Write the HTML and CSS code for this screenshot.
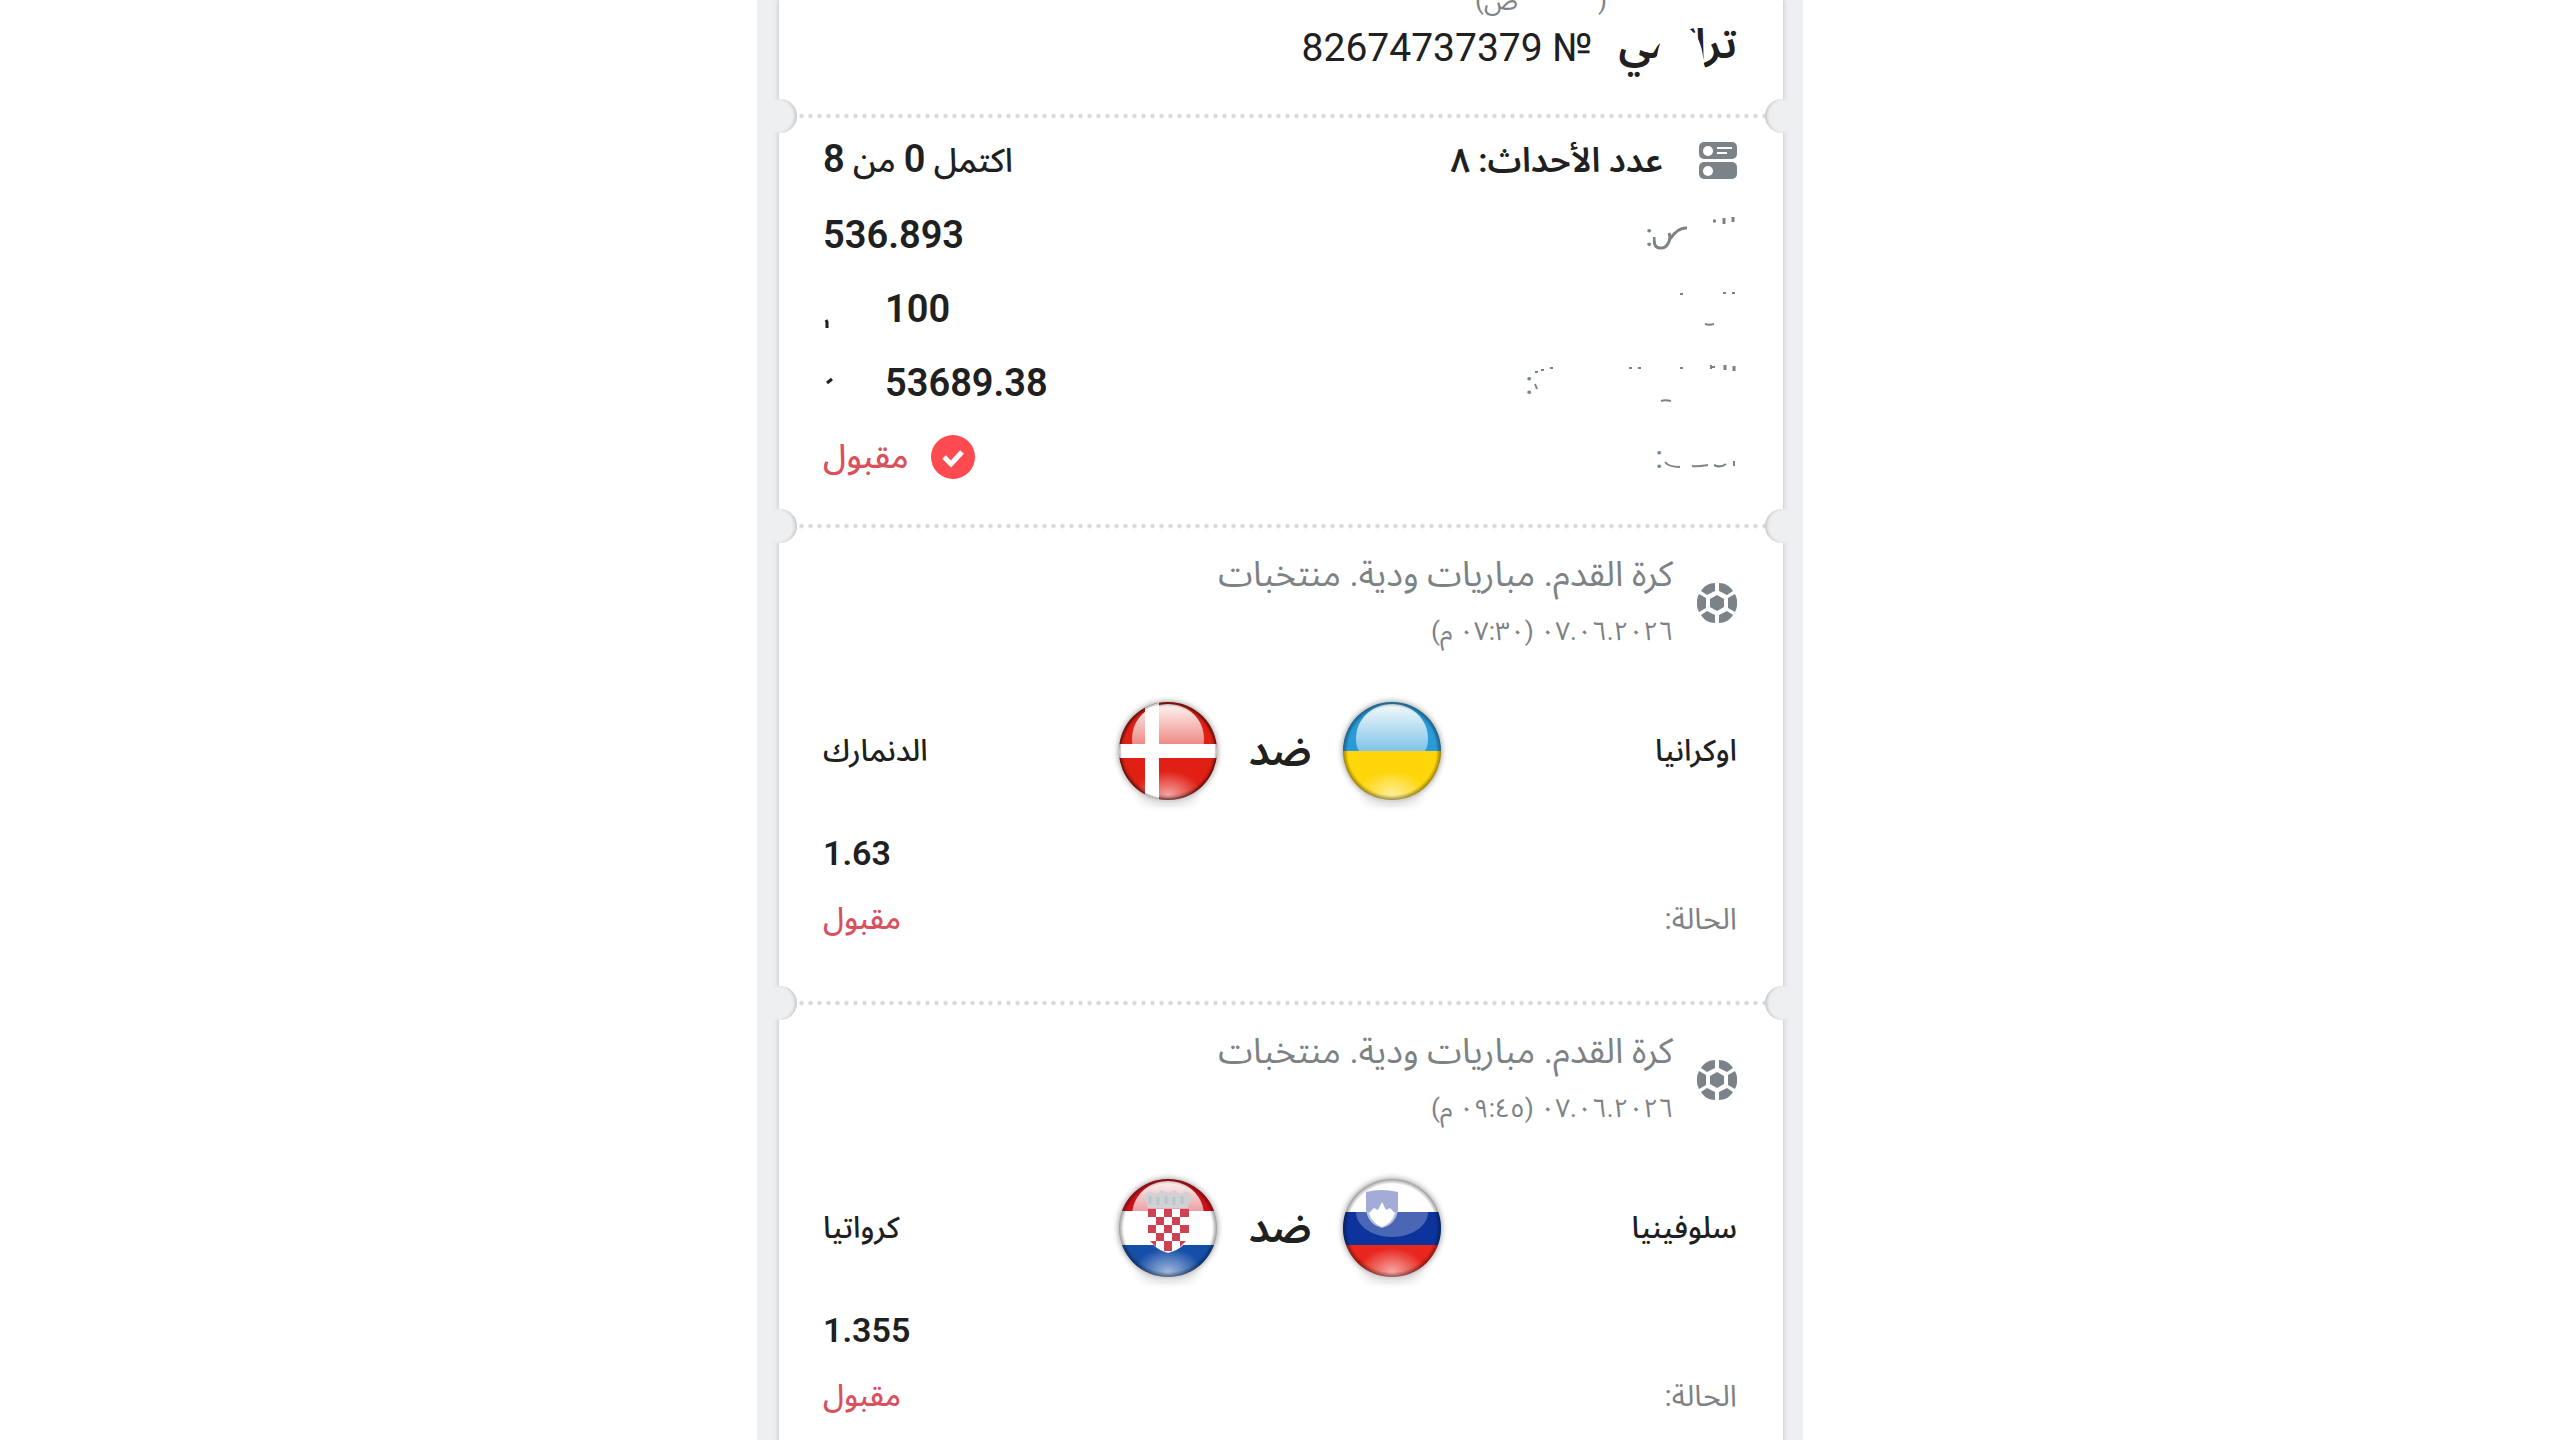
FILE: index.html
```html
<!DOCTYPE html>
<html lang="ar" dir="rtl">
<head>
  <meta charset="UTF-8" />
  <meta name="viewport" content="width=device-width, initial-scale=1.0" />
  <title>تراكمي № 82674737379</title>
  <link rel="stylesheet" href="styles.css">
</head>
<body>
  <svg class="defs" aria-hidden="true">
    <defs>
      <clipPath id="disc"><circle cx="54" cy="54" r="49" /></clipPath>
      <linearGradient id="gloss" x1="0" y1="0" x2="0" y2="1">
        <stop offset="0" stop-color="#fff" stop-opacity="0.95" />
        <stop offset="1" stop-color="#fff" stop-opacity="0.4" />
      </linearGradient>
      <radialGradient id="glow">
        <stop offset="0" stop-color="#fff" stop-opacity="0.6" />
        <stop offset="1" stop-color="#fff" stop-opacity="0" />
      </radialGradient>
      <radialGradient id="rim">
        <stop offset="0.9" stop-color="#000" stop-opacity="0" />
        <stop offset="1" stop-color="#000" stop-opacity="0.4" />
      </radialGradient>
      <g id="shine">
        <ellipse cx="54" cy="98" rx="34" ry="24" fill="url(#glow)" />
        <path d="M18 42C18 22 34 7 54 7s36 15 36 35c0 5-1 9-3 12H21c-2-3-3-7-3-12z" fill="url(#gloss)" />
        <circle cx="54" cy="54" r="49" fill="url(#rim)" />
      </g>
      <g id="ball" fill="#7b8388">
        <path d="M20 12l7 4v8l-7 4-7-4v-8z" />
        <path d="M18 0v8l-8 4-6-4C7 3 12 0 18 0zM22 0v8l8 4 6-4C33 3 28 0 22 0zM18 40v-8l-8-4-6 4c3 5 8 8 14 8zM22 40v-8l8-4 6 4c-3 5-8 8-14 8zM2 11l7 4v10l-7 4c-3-6-3-12 0-18zM38 11l-7 4v10l7 4c3-6 3-12 0-18z" />
      </g>
    </defs>
  </svg>

  <main class="screen">
    <article class="ticket">
      <header class="section head">
        <div class="time"><span>(</span><span>ص)</span></div>
        <h1 class="title">
          <span class="type">تراكمي
            <svg class="smudge" viewBox="0 0 48 40" aria-hidden="true"><path d="M0 40C2 14 10 2 24 2s22 12 24 38z" fill="#fff" /></svg>
          </span>
          <span class="number">№ 82674737379</span>
        </h1>
      </header>

      <section class="section summary">
        <div class="row">
          <div class="events">
            <svg class="icon" viewBox="0 0 38 38" aria-hidden="true">
              <rect x="0" y="0" width="38" height="17" rx="5" fill="#7b8388" />
              <rect x="0" y="20" width="38" height="17" rx="5" fill="#7b8388" />
              <circle cx="9" cy="9" r="5" fill="#fff" /><circle cx="9" cy="29" r="5" fill="#fff" />
              <path d="M18 6h15M18 11h10" stroke="#fff" stroke-width="2" />
            </svg>
            <span>عدد الأحداث: ٨</span>
          </div>
          <div class="done">اكتمل <b>0</b> من <b>8</b></div>
        </div>
        <div class="row">
          <div class="label">
            <svg class="w84" viewBox="0 0 84 40" aria-hidden="true"><path d="M80 2v5M71 3v6M60 6h3M34 13c-8-1-13 5-17 11M16 18c3 8-3 16-9 15-5 0-6-4-6-11" /></svg>
            <span>:</span>
          </div>
          <div class="value">536.893</div>
        </div>
        <div class="row">
          <div class="label">
            <svg class="w84" viewBox="0 0 84 40" aria-hidden="true"><path class="thin" d="M79 4h3M70 4h3M27 5h3M52 35c3 1 6 1 9 0" /></svg>
          </div>
          <div class="value money">
            <span>100</span>
            <svg class="cur" viewBox="0 0 60 40" aria-hidden="true"><path d="M2 31l1 2v6" /></svg>
          </div>
        </div>
        <div class="row">
          <div class="label">
            <svg class="w204" viewBox="0 0 204 40" aria-hidden="true"><path d="M201 3v5M192 2v5" /><path class="thin" d="M178 4h4M178 2v4M147 5h3M105 5h3M96 5h3M17 5h3M8 7h3M2 9h3M2 21l2 5M128 38c3-1 6-1 10 0" /></svg>
            <span>:</span>
          </div>
          <div class="value money">
            <span>53689.38</span>
            <svg class="cur" viewBox="0 0 60 40" aria-hidden="true"><path d="M3 20l5-4" /></svg>
          </div>
        </div>
        <div class="row">
          <div class="label">
            <svg class="w74" viewBox="0 0 74 40" aria-hidden="true"><path class="thin" d="M71 24v5M51 28c4 2 8 2 12-1M29 29c5 1 10 0 16-1M2 25c3 4 8 5 15 5" /></svg>
            <span>:</span>
          </div>
          <div class="state">
            <svg class="check" viewBox="0 0 44 44" aria-hidden="true"><circle cx="22" cy="22" r="22" fill="#ff4b4f" /><path d="M13 22l7 7 11-12" fill="none" stroke="#fff" stroke-width="5" /></svg>
            <span>مقبول</span>
          </div>
        </div>
      </section>

      <section class="section match">
        <div class="league">
          <svg class="icon ball" viewBox="0 0 40 40" aria-hidden="true"><use href="#ball" /></svg>
          <div>
            <h2 class="cup">كرة القدم. مباريات ودية. منتخبات</h2>
            <div class="date">٠٧.٠٦.٢٠٢٦ (٠٧:٣٠ م)</div>
          </div>
        </div>
        <div class="teams">
          <span>اوكرانيا</span>
          <div class="versus">
            <svg class="flag" viewBox="0 0 108 108" role="img" aria-label="اوكرانيا">
              <g clip-path="url(#disc)">
                <rect width="108" height="54" fill="#2b9bd8" />
                <rect y="54" width="108" height="54" fill="#ffd60a" />
              </g>
              <use href="#shine" />
            </svg>
            <strong>ضد</strong>
            <svg class="flag" viewBox="0 0 108 108" role="img" aria-label="الدنمارك">
              <g clip-path="url(#disc)"><rect width="108" height="108" fill="#e02015" /></g>
              <use href="#shine" />
              <g clip-path="url(#disc)"><path d="M38 0v108M0 54h108" stroke="#fff" stroke-width="14" /></g>
              <circle cx="54" cy="54" r="48" fill="none" stroke="#000" stroke-opacity="0.2" stroke-width="2" />
            </svg>
          </div>
          <span>الدنمارك</span>
        </div>
        <div class="odds">1.63</div>
        <div class="status"><span>الحالة:</span><b>مقبول</b></div>
      </section>

      <section class="section match">
        <div class="league">
          <svg class="icon ball" viewBox="0 0 40 40" aria-hidden="true"><use href="#ball" /></svg>
          <div>
            <h2 class="cup">كرة القدم. مباريات ودية. منتخبات</h2>
            <div class="date">٠٧.٠٦.٢٠٢٦ (٠٩:٤٥ م)</div>
          </div>
        </div>
        <div class="teams">
          <span>سلوفينيا</span>
          <div class="versus">
            <svg class="flag" viewBox="0 0 108 108" role="img" aria-label="سلوفينيا">
              <g clip-path="url(#disc)">
                <rect width="108" height="38" fill="#fff" />
                <rect y="38" width="108" height="33" fill="#0c349c" />
                <rect y="71" width="108" height="37" fill="#e8261e" />
                <path d="M28 18q15-4 32 0v18q-2 14-16 18-14-4-16-18z" fill="#a3acd6" />
                <path d="M31 39l5-5 4 2 4-8 4 8 4-2 5 5q-3 10-13 14-10-4-13-14z" fill="#fff" />
              </g>
              <path d="M18 38h72c0 14-16 25-36 25S18 52 18 38z" fill="#fff" fill-opacity="0.25" />
              <ellipse cx="54" cy="98" rx="34" ry="24" fill="url(#glow)" />
              <circle cx="54" cy="54" r="49" fill="url(#rim)" />
            </svg>
            <strong>ضد</strong>
            <svg class="flag" viewBox="0 0 108 108" role="img" aria-label="كرواتيا">
              <g clip-path="url(#disc)">
                <rect width="108" height="37" fill="#d0111b" />
                <rect y="37" width="108" height="34" fill="#fff" />
                <rect y="71" width="108" height="37" fill="#164fa8" />
              </g>
              <use href="#shine" />
              <path d="M30 21l6-4 6 3 6-4 6 3 6-3 6 4 6-3 6 4-4 13H34z" fill="#d3d0d4" />
              <path d="M36 22v8M44 23v8M52 22v8M60 23v8M68 22v8" stroke="#b5c7ce" stroke-width="3" />
              <path d="M34 35h41v24q-2 15-21 20-18-5-20-20z" fill="#fff" />
              <path d="M34 35h8v8h-8zM50 35h8v8h-8zM66 35h9v8h-9zM42 43h8v8h-8zM58 43h8v8h-8zM34 51h8v8h-8zM50 51h8v8h-8zM66 51h9v8h-9zM42 59h8v8h-8zM58 59h8v8h-8zM36 67h6v6zM50 67h8v10h-8zM66 67h6l-6 6z" fill="#cb4353" />
            </svg>
          </div>
          <span>كرواتيا</span>
        </div>
        <div class="odds">1.355</div>
        <div class="status"><span>الحالة:</span><b>مقبول</b></div>
      </section>
    </article>
  </main>
</body>
</html>
```

FILE: styles.css
```css
* { box-sizing: border-box; }
body {
  margin: 0; height: 100vh; overflow: hidden; background: #fff; color: #202020;
  font-family: Roboto, "Noto Sans Arabic", "Noto Naskh Arabic", "DejaVu Sans", sans-serif;
}
h1, h2 { margin: 0; font-weight: 400; }
.defs { display: block; width: 0; height: 0; }
.screen { max-width: 1046px; min-height: 100vh; margin: 0 auto; padding: 0 20px 0 22px; background: #edeff1; }
.ticket { background: #fff; box-shadow: 0 0 5px #b9bdc0; }

.section { position: relative; padding: 0 46px 0 44px; }
/* perforated edge between the parts of the ticket */
.section + .section {
  background: radial-gradient(circle, #d2d4d5 1px, transparent 3px) 0 0 / 9px 6px repeat-x;
}
.section + .section::before, .section + .section::after {
  content: ""; position: absolute; top: -14px; width: 23px; height: 34px; background: #edeff1;
}
.section + .section::before { right: -5px; border-radius: 17px 0 0 17px; box-shadow: inset 3px 0 3px -1px #c6c9cb; }
.section + .section::after { left: -5px; border-radius: 0 17px 17px 0; box-shadow: inset -3px 0 3px -1px #c6c9cb; }

.head { height: 113px; }
.time { display: flex; gap: 80px; height: 20px; padding-right: 130px; line-height: 0; font-size: 26px; color: #7d8285; }
.title { display: flex; align-items: center; gap: 26px; height: 56px; font-size: 39px; }
.type { position: relative; padding-bottom: 8px; font-weight: 600; font-size: 42px; }
.smudge { position: absolute; top: 25px; left: 38px; width: 48px; height: 40px; }

.summary { height: 410px; padding-top: 11px; }
.row { display: flex; justify-content: space-between; align-items: center; height: 74px; }
.events { display: flex; align-items: center; gap: 36px; font-size: 34px; font-weight: 600; }
.icon { flex: none; width: 38px; height: 38px; }
.done { font-size: 33px; font-weight: 500; }
.done b { font-size: 38px; font-weight: 600; }
.label { display: flex; align-items: center; font-size: 32px; color: #7d8285; }
.label svg { height: 40px; }
.label path, .cur path { fill: none; stroke: currentColor; stroke-width: 3; }
.label .thin { stroke-width: 2; }
.w84 { width: 84px; }
.w74 { width: 74px; }
.w204 { width: 204px; }
.value { font-size: 38px; font-weight: 600; }
.money { display: flex; align-items: center; }
.cur { width: 62px; height: 40px; }
.state { display: flex; align-items: center; gap: 22px; font-size: 33px; font-weight: 500; color: #d9505f; }
.check { width: 44px; height: 44px; }

.match { height: 477px; padding-top: 22px; }
.league { display: flex; align-items: center; gap: 24px; height: 116px; color: #7d8285; }
.ball { width: 40px; height: 40px; }
.cup { font-size: 35px; line-height: 56px; }
.date { font-size: 26px; line-height: 56px; }
.teams { display: grid; grid-template-columns: 1fr auto 1fr; align-items: center; height: 180px; font-size: 30px; font-weight: 500; }
.teams > :last-child { text-align: left; }
.versus { display: flex; align-items: center; gap: 26px; }
.versus strong { font-size: 42px; font-weight: 600; }
.flag { width: 108px; height: 108px; filter: drop-shadow(0 0 3px #8a8a8a); }
.odds { height: 24px; line-height: 24px; text-align: left; font-size: 34px; font-weight: 600; }
.status { display: flex; justify-content: space-between; align-items: center; height: 108px; font-size: 30px; color: #7d8285; }
.status b { font-weight: 500; color: #d9505f; }
```
